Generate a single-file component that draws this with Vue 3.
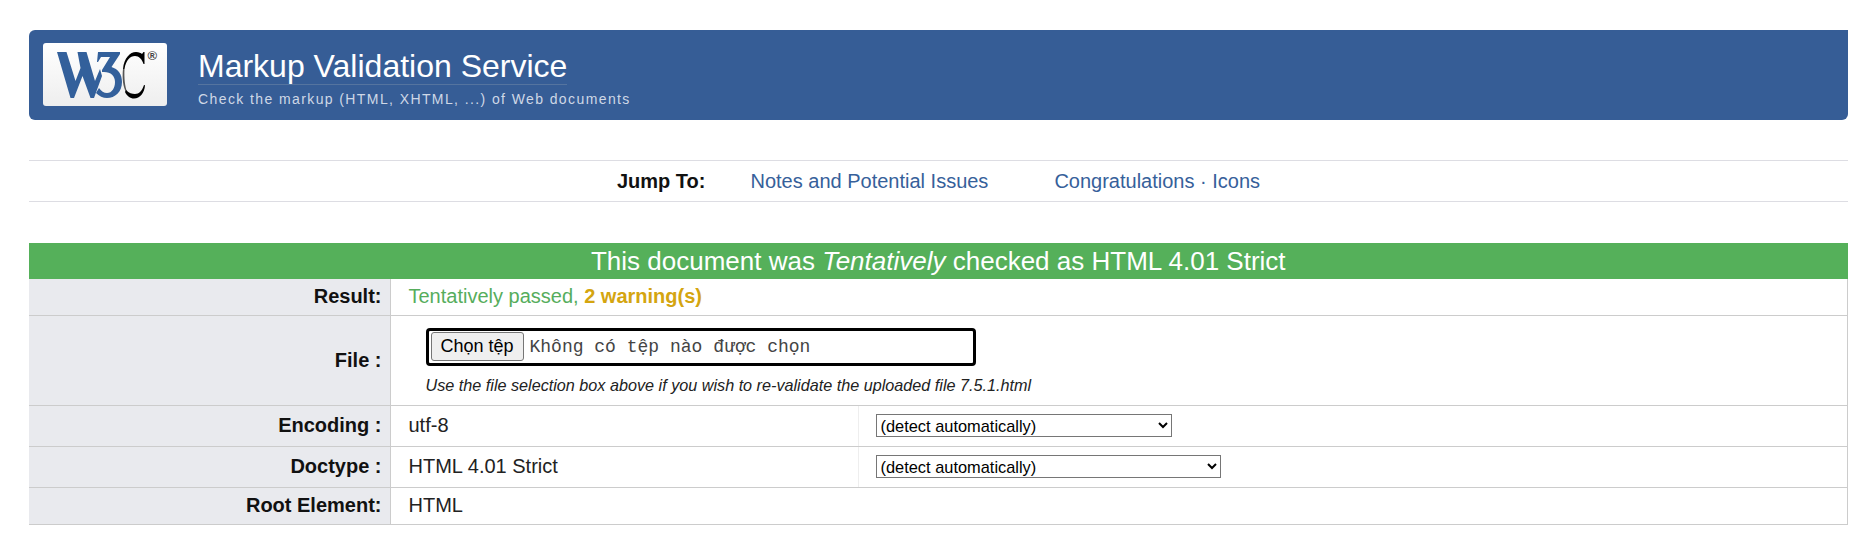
<template>
  <div class="page">
    <header class="banner">
      <a class="logo" href="#">
        <svg class="logo__mark" viewBox="0 0 124 63" width="124" height="63" aria-label="W3C">
          <defs>
            <linearGradient id="logoBg" x1="0" y1="0" x2="0" y2="1">
              <stop offset="0" stop-color="#ffffff" />
              <stop offset="1" stop-color="#eeeeee" />
            </linearGradient>
          </defs>
          <rect width="124" height="63" rx="3" fill="url(#logoBg)" />
          <path fill="#33609b" d="M14 9H23.500L32.500 38L37.500 25L34.500 9H43.500L52 38L57 26L59 33L51 55H47.500L39.500 33L31 55H27.500Z" />
          <path fill="#33609b" d="M55 9H77V11L68.500 24C75 26 79 31 79 39C79 49 72 55 64 55C60 55 56 53 53 50L56 45C58 48 61 50 64 50C69 50 72 45 72 39C72 33 68 29 61 29H59V27L67 14H58L55 19H54Z" />
          <path fill="#000000" d="M80 26C81 15 87 9 93 9C96 9 98 10 99 11L100.500 9H101.500L101.500 21H100.500C99 16 96 13 92 13C87 13 83 17 81.500 26Z" />
          <path fill="#555555" d="M80 26C79 35 80 44 83 49L84 48.500C82 44 81 35 81.500 26Z" />
          <path fill="#000000" d="M83 47C86 50 89 51 92 51C96 51 99 48 101 42L102 42.300C101.500 50 97 55.500 91 55.500C87 55.500 84 53 82 49Z" />
        </svg>
        <span class="logo__reg">®</span>
      </a>
      <div class="banner__text">
        <h1 class="banner__title">Markup Validation Service</h1>
        <p class="banner__sub">Check the markup (HTML, XHTML, ...) of Web documents</p>
      </div>
    </header>

    <nav class="jump">
      <strong class="jump__label">Jump To:</strong>
      <a class="jump__link" href="#notes">Notes and Potential Issues</a>
      <span class="jump__group">
        <a class="jump__link" href="#congrats">Congratulations</a> · <a class="jump__link" href="#icons">Icons</a>
      </span>
    </nav>

    <table class="result">
      <colgroup>
        <col class="result__col-label" />
        <col class="result__col-value" />
        <col />
      </colgroup>
      <thead>
        <tr>
          <th class="result__head" colspan="3">This document was <em>Tentatively</em> checked as HTML 4.01 Strict</th>
        </tr>
      </thead>
      <tbody>
        <tr class="row row--result">
          <th>Result:</th>
          <td colspan="2"><span class="pass">Tentatively passed, </span><strong class="warn">2 warning(s)</strong></td>
        </tr>
        <tr class="row row--file">
          <th>File :</th>
          <td class="file-cell" colspan="2">
            <div class="file">
              <button class="file__btn" type="button">Chọn tệp</button>
              <span class="file__name">Không có tệp nào được chọn</span>
            </div>
            <p class="file__note">Use the file selection box above if you wish to re-validate the uploaded file 7.5.1.html</p>
          </td>
        </tr>
        <tr class="row row--select">
          <th>Encoding :</th>
          <td class="value">utf-8</td>
          <td class="pick">
            <select class="pick__box pick__box--enc"><option>(detect automatically)</option></select>
          </td>
        </tr>
        <tr class="row row--select">
          <th>Doctype :</th>
          <td class="value">HTML 4.01 Strict</td>
          <td class="pick">
            <select class="pick__box pick__box--doc"><option>(detect automatically)</option></select>
          </td>
        </tr>
        <tr class="row row--root">
          <th>Root Element:</th>
          <td colspan="2">HTML</td>
        </tr>
      </tbody>
    </table>
  </div>
</template>

<script setup>
</script>

<style>
html, body { background: #fff; }
</style>

<style scoped>
.page {
  padding: 30px 27px 0 29px;
  font-family: 'Liberation Sans', Arial, sans-serif;
  font-size: 20px;
  color: #222;
}

.banner {
  display: flex;
  align-items: flex-start;
  height: 90px;
  box-sizing: border-box;
  padding: 13px 0 0 14px;
  background: #365d96;
  border-radius: 6px;
  border-top-right-radius: 0;
}

.logo {
  position: relative;
  display: block;
  width: 124px;
  height: 63px;
}
.logo__mark { display: block; }
.logo__reg {
  position: absolute;
  top: 6px;
  right: 10px;
  font-size: 13px;
  line-height: 14px;
  font-weight: 700;
  color: #444;
}

.banner__text {
  display: flex;
  flex-direction: column;
  align-items: flex-start;
  margin-left: 31px;
}
.banner__title {
  margin: 0;
  padding-top: 5px;
  height: 36px;
  font-size: 32px;
  font-weight: 400;
  line-height: 36px;
  color: #fff;
  border-bottom: 1px solid #55749f;
}
.banner__sub {
  margin: 6px 0 0;
  font-size: 14px;
  line-height: 16px;
  letter-spacing: 1.4px;
  white-space: nowrap;
  color: #cfd8e6;
}

.jump {
  display: flex;
  justify-content: center;
  align-items: center;
  height: 42px;
  box-sizing: border-box;
  margin: 40px 0 41px;
  border-top: 1px solid #dddde3;
  border-bottom: 1px solid #dddde3;
}
.jump__label { color: #111; margin-right: 45px; }
.jump__group { margin-left: 66px; color: #36609a; }
.jump__link { color: #36609a; text-decoration: none; }

.result {
  width: 100%;
  table-layout: fixed;
  border-collapse: collapse;
}
.result__col-label { width: 361px; }
.result__col-value { width: 468px; }
.result__head {
  height: 36px;
  padding: 0;
  background: #55b05a;
  color: #fff;
  font-size: 26px;
  font-weight: 400;
  text-align: center;
}
.row th {
  padding: 0 8px 0 0;
  background: #e9eaee;
  color: #111;
  font-weight: 700;
  text-align: right;
  border-bottom: 1px solid #cccccc;
  border-right: 1px solid #cccccc;
}
.row td {
  padding: 0 0 0 18px;
  border-bottom: 1px solid #cccccc;
  border-right: 1px solid #cccccc;
}
.row--result { height: 36px; }
.row--file { height: 90px; }
.row--select { height: 41px; }
.row--root { height: 37px; }
.row td.value { border-right: 1px solid #eeeeee; }
.row td.pick { padding-left: 17px; }
.row td.file-cell {
  padding-top: 12px;
  vertical-align: top;
}

.pass { color: #56ad5c; }
.warn { color: #d4a510; }

.file {
  display: flex;
  align-items: center;
  width: 550px;
  height: 38px;
  box-sizing: border-box;
  margin-left: 17px;
  padding-left: 2px;
  border: 3px solid #000;
  border-radius: 4px;
}
.file__btn {
  width: 93px;
  height: 29px;
  padding: 0;
  font-family: inherit;
  font-size: 18px;
  color: #000;
  background: #efefef;
  border: 1px solid #767676;
  border-radius: 3px;
}
.file__name {
  margin-left: 6px;
  font-family: 'Liberation Mono', monospace;
  font-size: 18px;
  color: #444;
}
.file__note {
  margin: 10px 0 0 17px;
  font-size: 16.2px;
  font-style: italic;
  color: #222;
}

.pick__box {
  display: block;
  height: 23px;
  font-family: inherit;
  font-size: 16.4px;
  background: #fff;
}
.pick__box--enc { width: 296px; }
.pick__box--doc { width: 345px; }
</style>
